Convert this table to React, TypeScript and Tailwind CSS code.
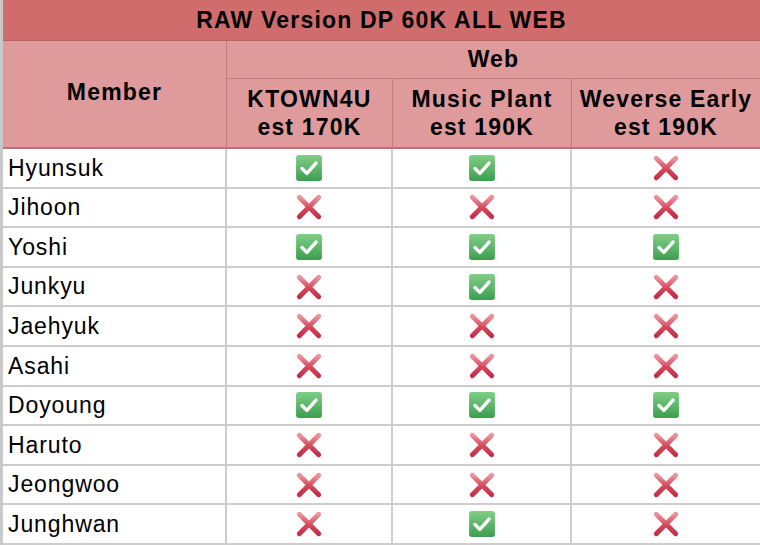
const members: [string, boolean, boolean, boolean][] = [
  ["Hyunsuk", true, true, false],
  ["Jihoon", false, false, false],
  ["Yoshi", true, true, true],
  ["Junkyu", false, true, false],
  ["Jaehyuk", false, false, false],
  ["Asahi", false, false, false],
  ["Doyoung", true, true, true],
  ["Haruto", false, false, false],
  ["Jeongwoo", false, false, false],
  ["Junghwan", false, true, false],
];

function CheckMark() {
  return (
    <svg width="28" height="28" viewBox="0 0 26 26">
      <defs>
        <linearGradient id="ckg" x1="0" y1="0" x2="0" y2="1">
          <stop offset="0" stopColor="#7fcf86" />
          <stop offset="1" stopColor="#3d9e50" />
        </linearGradient>
      </defs>
      <rect x="1" y="1" width="24" height="24" rx="2.5" fill="url(#ckg)" />
      <path d="M6.5 13.5 L11 18 L19.5 8.5" fill="none" stroke="#ffffff" strokeWidth="3.2" strokeLinecap="round" strokeLinejoin="round" />
    </svg>
  );
}

function CrossMark() {
  return (
    <svg width="28" height="28" viewBox="0 0 26 26">
      <defs>
        <linearGradient id="crg" x1="0" y1="0" x2="0" y2="1">
          <stop offset="0" stopColor="#ea949c" />
          <stop offset="0.55" stopColor="#d6485c" />
          <stop offset="1" stopColor="#c43049" />
        </linearGradient>
      </defs>
      <path d="M4 4 L22 22 M22 4 L4 22" fill="none" stroke="url(#crg)" strokeWidth="4.6" strokeLinecap="round" />
    </svg>
  );
}

export default function App() {
  return (
    <div
      className="w-[760px] h-[545px] overflow-hidden bg-white text-black"
      style={{ fontFamily: '"Liberation Sans", Arial, sans-serif' }}
    >
      <div className="border-l-[3px] border-[#c9c9c9]">
        <div className="h-[41px] bg-[#d16c6c] flex items-center justify-center text-[23px] tracking-[1.2px] font-bold border-b border-[#c06060]">
          RAW Version DP 60K ALL WEB
        </div>
        <div className="grid grid-cols-[224px_166px_179px_188px] bg-[#df9b9b] border-b-[2px] border-[#b97373]">
          <div className="row-span-2 flex items-center justify-center text-[23px] tracking-[1.2px] font-bold border-r border-[#be7e7e] pb-[4px]">
            Member
          </div>
          <div className="col-span-3 h-[38px] flex items-center justify-center text-[23px] tracking-[1.2px] font-bold border-b border-[#be7e7e]">
            Web
          </div>
          {["KTOWN4U", "Music Plant", "Weverse Early"].map((label, i) => (
            <div
              key={label}
              className={`h-[68px] flex flex-col items-center justify-center text-[23px] tracking-[1.2px] font-bold leading-[28px] ${i < 2 ? "border-r border-[#be7e7e]" : ""}`}
            >
              <span>{label}</span>
              <span>{i === 0 ? "est 170K" : "est 190K"}</span>
            </div>
          ))}
        </div>
        <div className="grid grid-cols-[224px_166px_179px_188px]">
          {members.map(([name, a, b, c]) => (
            <div key={name} className="contents">
              <div className="h-[39.6px] flex items-center pl-[5px] text-[23px] tracking-[0.9px] border-r-[2px] border-b-[2px] border-[#cdcdcd]">
                {name}
              </div>
              {[a, b, c].map((v, i) => (
                <div
                  key={i}
                  className={`h-[39.6px] flex items-center justify-center border-b-[2px] border-[#cdcdcd] ${i < 2 ? "border-r-[2px]" : ""}`}
                >
                  {v ? <CheckMark /> : <CrossMark />}
                </div>
              ))}
            </div>
          ))}
        </div>
      </div>
    </div>
  );
}
